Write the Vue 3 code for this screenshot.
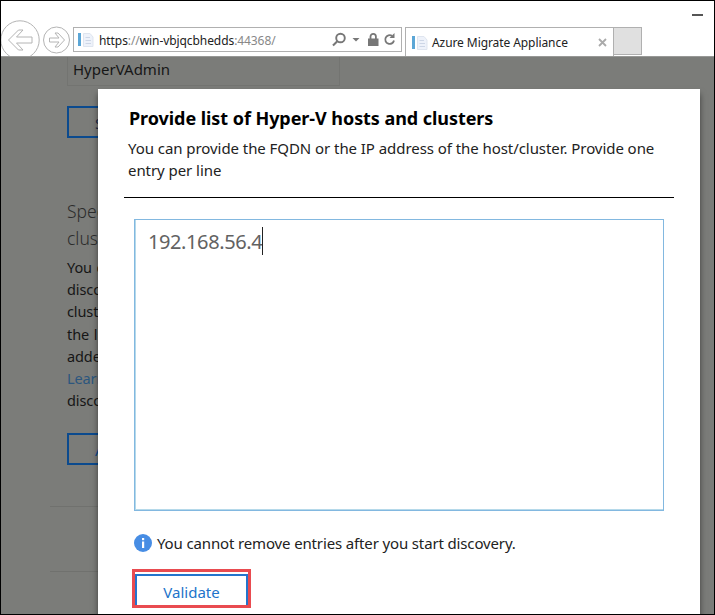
<script setup>
const hostEntry = '192.168.56.4'
const introLines = ['You can', 'discover', 'clusters', 'the list', 'added', 'Learn', 'discovery']
</script>

<template>
  <div class="window">
    <header class="chrome">
      <div class="caption"><span class="minimize"></span></div>
      <div class="toolbar">
        <svg class="nav" width="79" height="40" viewBox="0 0 79 40" fill="none" stroke="#b4b4b4">
          <circle cx="19" cy="20" r="19.2" />
          <path d="M7.5 20 L17.5 10 H22 L15.5 17 H31 V23 H15.5 L22 30 H17.5 Z" />
          <circle cx="55.5" cy="20" r="13" />
          <path d="M63.5 20 L57 13 H54 L58 18 H48.500 V22 H58 L54 27 H57 Z" />
        </svg>
      </div>
      <div class="address">
        <svg class="page-icon" width="16" height="16" viewBox="0 0 16 16">
          <rect x="0" y="1" width="3" height="13" fill="#5ba6d6" />
          <path d="M5.500 1.500 H12 L15 5 V14.500 H5.500 Z" fill="#eef2fa" stroke="#dfe5ef" />
          <path d="M7.500 5.500 H12 M7.500 8.500 H13 M7.500 11.500 H13" stroke="#cdd6e6" />
        </svg>
        <span class="url"><i>https</i>://<i>win-vbjqcbhedds</i>:44368/</span>
        <svg class="tools" width="66" height="18" viewBox="0 0 66 18" fill="none" stroke="#777">
          <circle cx="9.500" cy="7" r="4.300" stroke-width="1.900" />
          <path d="M6.300 10.200 L2 14.500" stroke-width="2" />
          <path d="M21.500 7 H28.500 L25 10.500 Z" fill="#777" stroke="none" />
          <path d="M39.500 8 V5.500 A2.700 2.700 0 0 1 44.900 5.500 V8" stroke-width="1.800" />
          <rect x="37" y="7.500" width="10.500" height="7.500" fill="#777" stroke="none" />
          <path d="M61 4.800 A4.400 4.400 0 1 0 63 9.500" stroke-width="1.800" />
          <path d="M63.500 2 V7 H58.500 Z" fill="#777" stroke="none" />
        </svg>
      </div>
      <div class="tab">
        <svg class="page-icon" width="16" height="16" viewBox="0 0 16 16">
          <rect x="0" y="1" width="3" height="13" fill="#5ba6d6" />
          <path d="M5.500 1.500 H12 L15 5 V14.500 H5.500 Z" fill="#eef2fa" stroke="#dfe5ef" />
          <path d="M7.500 5.500 H12 M7.500 8.500 H13 M7.500 11.500 H13" stroke="#cdd6e6" />
        </svg>
        <span class="tab-title">Azure Migrate Appliance</span>
        <svg class="close" width="9" height="9" viewBox="0 0 9 9" stroke="#aaa" stroke-width="1.800">
          <path d="M1 1 L8 8 M8 1 L1 8" />
        </svg>
      </div>
      <div class="new-tab"></div>
    </header>

    <main class="page">
      <section class="background">
        <div class="account"><span>HyperVAdmin</span></div>
        <div class="outline-button first">Save</div>
        <h2>Specify<br />clusters</h2>
        <div class="intro">
          <div v-for="(line, i) in introLines" :key="i" :class="{ link: line === 'Learn' }">{{ line }}</div>
        </div>
        <div class="outline-button second">Add</div>
        <div class="rule one"></div>
        <div class="rule two"></div>
      </section>

      <section class="dialog">
        <h1><span>Provide list of Hyper-V hosts and clusters</span></h1>
        <p class="description">
          <span>You can provide the FQDN or the IP address of the host/cluster. Provide one</span><br />
          <span>entry per line</span>
        </p>
        <div class="divider"></div>
        <div class="entry"><span>{{ hostEntry }}</span><b class="caret"></b></div>
        <div class="notice">
          <svg width="18" height="18" viewBox="0 0 18 18">
            <circle cx="9" cy="9" r="9" fill="#478de4" />
            <rect x="8" y="4" width="2.200" height="2.200" fill="#fff" />
            <rect x="8" y="7.500" width="2.200" height="6.500" fill="#fff" />
          </svg>
          <span>You cannot remove entries after you start discovery.</span>
        </div>
        <div class="highlight"><div class="validate"><span>Validate</span></div></div>
      </section>
    </main>
  </div>
</template>

<style>
body { margin: 0; overflow: hidden; }
</style>

<style scoped>
.window {
  box-sizing: border-box;
  width: 715px;
  height: 615px;
  border: 1px solid #000;
  overflow: hidden;
  background: #fff;
  display: flex;
  flex-direction: column;
  font-family: "Noto Sans", "Open Sans", sans-serif;
  color: #222;
  white-space: nowrap;
}
.chrome {
  height: 55px;
  flex: none;
  display: grid;
  grid-template-columns: 72px 330px 2px 209px 28px;
  grid-template-rows: 26px 29px;
  overflow: hidden;
}
.caption { grid-column: 1 / -1; width: 702px; display: flex; justify-content: flex-end; }
.minimize { width: 11px; height: 2px; margin-top: 13px; background: #555; }
.toolbar { height: 29px; }
.nav { display: block; margin-top: -7px; overflow: visible; }
.address {
  box-sizing: border-box;
  width: 329px;
  height: 25px;
  border: 1px solid #b0b0b0;
  display: flex;
  align-items: center;
  padding: 0 4px 0 4px;
}
.page-icon { flex: none; }
.url { margin-left: 5px; padding-top: 1px; font-size: 12px; letter-spacing: -0.08px; color: #888; flex: 1; }
.url i { font-style: normal; color: #222; }
.tools { flex: none; }
.tab {
  grid-column: 4;
  box-sizing: border-box;
  border: 1px solid #b0b0b0;
  border-bottom: 0;
  display: flex;
  align-items: center;
  padding: 1px 6px 0 6px;
}
.tab-title { flex: 1; margin-left: 4px; font-size: 12px; letter-spacing: -0.08px; }
.new-tab { box-sizing: border-box; height: 28px; border: 1px solid #b0b0b0; border-left: 0; background: #e0e0e0; }
.page { position: relative; flex: 1; overflow: hidden; background: #7b7c79; border-top: 1px solid #979896; }
.background { padding-left: 66px; }
.account {
  box-sizing: border-box;
  width: 273px;
  height: 29px;
  border: 1px solid #737471;
  border-top: 0;
  padding-left: 5px;
  font-size: 15px;
  line-height: 25px;
  color: #161616;
}
.outline-button {
  box-sizing: border-box;
  width: 120px;
  height: 32px;
  border: 2px solid #0b4a8e;
  padding-left: 26px;
  line-height: 30px;
  font-size: 15px;
  color: #0b4a8e;
}
.first { margin-top: 20px; color: #1b2a4a; }
.background h2 { margin: 60px 0 0; font-size: 17.5px; line-height: 27px; font-weight: 300; color: #2c2c2c; }
.intro { margin-top: 4px; font-size: 14.5px; line-height: 22.2px; color: #161616; letter-spacing: -0.1px; word-spacing: 1px; }
.link { color: #2c567e; }
.second { margin-top: 22px; }
.rule { width: 60px; height: 1px; margin-left: -17px; background: #70716e; }
.one { margin-top: 41px; }
.two { margin-top: 64px; }
.dialog {
  position: absolute;
  left: 97px;
  top: 32px;
  width: 602px;
  height: 530px;
  box-sizing: border-box;
  padding: 15px 26px 0 26px;
  background: #fff;
  box-shadow: 0 5px 6px rgba(0, 0, 0, 0.5);
}
.dialog h1 { margin: 0 0 0 5px; font-size: 18px; line-height: 29px; font-weight: 700; color: #000; letter-spacing: -0.06px; }
.description { margin: 4px 0 0 4px; font-size: 15px; line-height: 22px; letter-spacing: -0.06px; }
.divider { height: 1px; margin-top: 16px; background: #000; }
.entry {
  box-sizing: border-box;
  width: 530px;
  height: 292px;
  margin: 21px 0 0 10px;
  border: 1px solid #82b8e0;
  box-shadow: inset 1px 0 #b5d9ea, inset 0 -1px #b5d9ea;
  padding: 7px 13px;
  display: flex;
  align-items: flex-start;
  font-size: 20px;
  line-height: 30px;
  letter-spacing: -0.4px;
  color: #626262;
}
.caret { width: 1px; height: 28px; background: #222; }
.notice { display: flex; align-items: center; height: 22px; margin: 21px 0 0 10px; gap: 5px; font-size: 15px; letter-spacing: -0.14px; }
.highlight { box-sizing: border-box; width: 119px; height: 39px; margin: 15px 0 0 8px; border: 3px solid #e94b50; padding-top: 2px; }
.validate { box-sizing: border-box; height: 31px; border: 2px solid #2474cc; border-bottom: 0; text-align: center; font-size: 15px; line-height: 32px; color: #2273ca; }
</style>
